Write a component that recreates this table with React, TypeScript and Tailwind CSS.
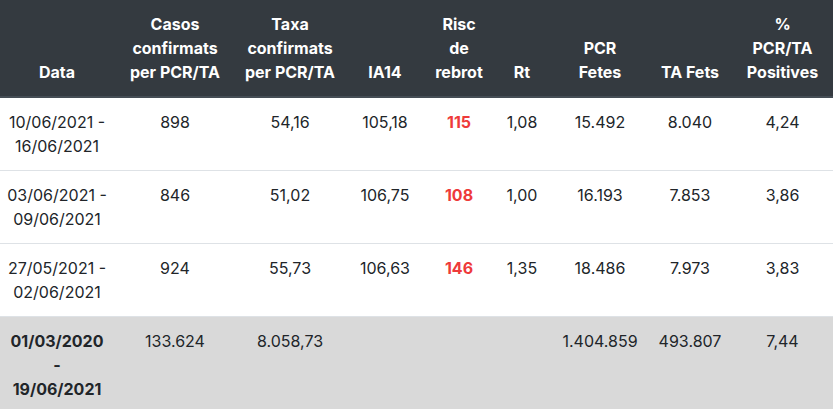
import React from "react";

type Row = {
  date: [string, string];
  casos: string;
  taxa: string;
  ia14: string;
  risc: string;
  rt: string;
  pcr: string;
  ta: string;
  pct: string;
};

const rows: Row[] = [
  { date: ["10/06/2021 -", "16/06/2021"], casos: "898", taxa: "54,16", ia14: "105,18", risc: "115", rt: "1,08", pcr: "15.492", ta: "8.040", pct: "4,24" },
  { date: ["03/06/2021 -", "09/06/2021"], casos: "846", taxa: "51,02", ia14: "106,75", risc: "108", rt: "1,00", pcr: "16.193", ta: "7.853", pct: "3,86" },
  { date: ["27/05/2021 -", "02/06/2021"], casos: "924", taxa: "55,73", ia14: "106,63", risc: "146", rt: "1,35", pcr: "18.486", ta: "7.973", pct: "3,83" },
];

const widths = ["w-[114px]", "w-[122px]", "w-[108px]", "w-[82px]", "w-[66px]", "w-[60px]", "w-[96px]", "w-[84px]", "w-[101px]"];

const th = "border-b-2 border-[#454d55] px-0 pt-[12px] pb-[12px] align-bottom text-center font-bold whitespace-nowrap";
const td = "border-t border-[#dee2e6] px-0 py-[12px] align-top text-center whitespace-nowrap";

export default function App() {
  return (
    <div className="w-[833px] h-[409px] overflow-hidden bg-white" style={{ fontFamily: "Inter, 'Liberation Sans', sans-serif" }}>
      <table className="w-[833px] table-fixed border-collapse text-[16px] leading-[24px] text-[#212529]">
        <colgroup>
          {widths.map((w, i) => (
            <col key={i} className={w} />
          ))}
        </colgroup>
        <thead className="bg-[#343a40] text-white">
          <tr>
            <th className={th}>Data</th>
            <th className={th}>Casos<br />confirmats<br />per PCR/TA</th>
            <th className={th}>Taxa<br />confirmats<br />per PCR/TA</th>
            <th className={th}>IA14</th>
            <th className={th}>Risc<br />de<br />rebrot</th>
            <th className={th}>Rt</th>
            <th className={th}>PCR<br />Fetes</th>
            <th className={th}>TA Fets</th>
            <th className={th}>%<br />PCR/TA<br />Positives</th>
          </tr>
        </thead>
        <tbody>
          {rows.map((r, i) => (
            <tr key={i}>
              <td className={td}>{r.date[0]}<br />{r.date[1]}</td>
              <td className={td}>{r.casos}</td>
              <td className={td}>{r.taxa}</td>
              <td className={td}>{r.ia14}</td>
              <td className={td + " font-bold text-[#ee3a3a]"}>{r.risc}</td>
              <td className={td}>{r.rt}</td>
              <td className={td}>{r.pcr}</td>
              <td className={td}>{r.ta}</td>
              <td className={td}>{r.pct}</td>
            </tr>
          ))}
          <tr className="bg-[#d9d9d9]">
            <td className={td + " font-bold"}>01/03/2020<br />-<br />19/06/2021</td>
            <td className={td}>133.624</td>
            <td className={td}>8.058,73</td>
            <td className={td}></td>
            <td className={td}></td>
            <td className={td}></td>
            <td className={td}>1.404.859</td>
            <td className={td}>493.807</td>
            <td className={td}>7,44</td>
          </tr>
        </tbody>
      </table>
    </div>
  );
}
